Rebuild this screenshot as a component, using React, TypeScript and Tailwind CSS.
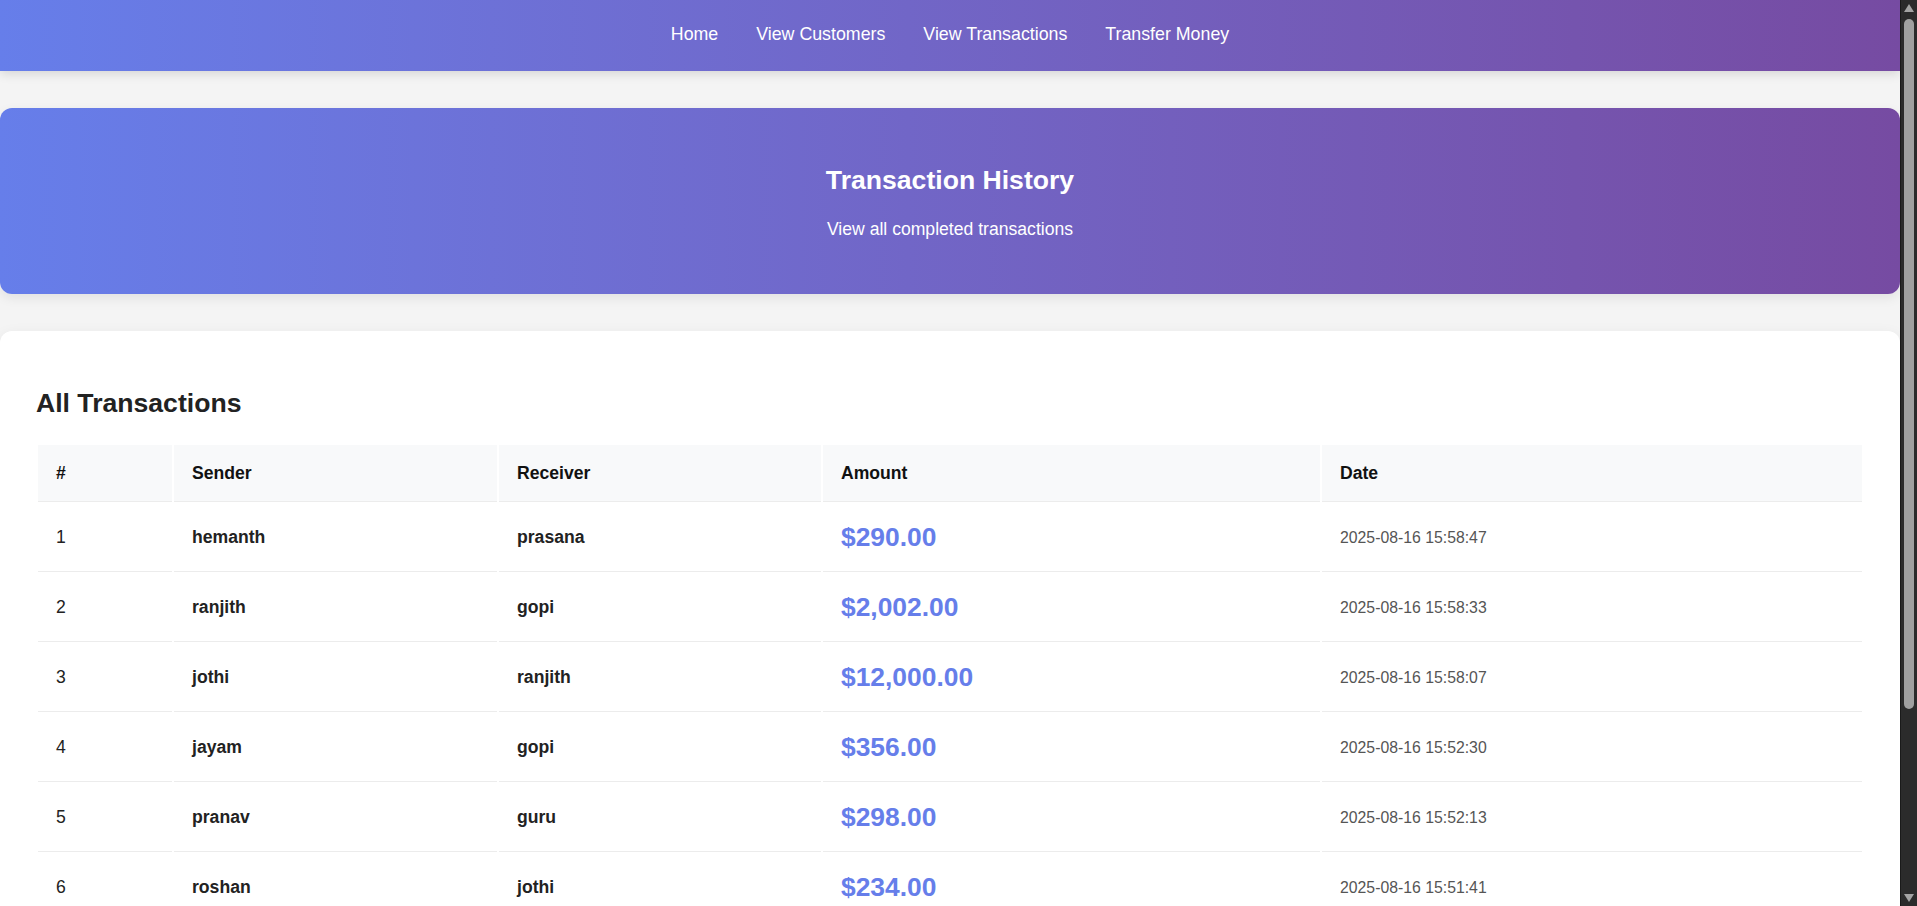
const links = ["Home", "View Customers", "View Transactions", "Transfer Money"];

const transactions = [
  { id: 1, sender: "hemanth", receiver: "prasana", amount: "$290.00", date: "2025-08-16 15:58:47" },
  { id: 2, sender: "ranjith", receiver: "gopi", amount: "$2,002.00", date: "2025-08-16 15:58:33" },
  { id: 3, sender: "jothi", receiver: "ranjith", amount: "$12,000.00", date: "2025-08-16 15:58:07" },
  { id: 4, sender: "jayam", receiver: "gopi", amount: "$356.00", date: "2025-08-16 15:52:30" },
  { id: 5, sender: "pranav", receiver: "guru", amount: "$298.00", date: "2025-08-16 15:52:13" },
  { id: 6, sender: "roshan", receiver: "jothi", amount: "$234.00", date: "2025-08-16 15:51:41" },
];

function Navbar() {
  return (
    <nav className="relative z-10 flex h-[71px] items-center justify-center gap-[38px] bg-gradient-to-r from-[#667eea] to-[#764ba2] pb-[3px] shadow-[0_3px_10px_rgba(0,0,0,0.12)]">
      {links.map((l) => (
        <a key={l} href="#" className="text-[17.8px] leading-[20px] text-white">
          {l}
        </a>
      ))}
    </nav>
  );
}

// the window's scrollbar, as seen in the screenshot
function Scrollbar() {
  return (
    <div className="fixed top-0 right-0 z-20 flex h-screen w-[17px] flex-col items-center border-l border-[#1a1a1a] bg-[#2b2b2b]">
      <svg width="10" height="8" viewBox="0 0 10 8" className="mt-[4px]">
        <polygon points="5,0 10,8 0,8" fill="#a3a3a3" />
      </svg>
      <div className="mt-[7px] h-[690px] w-[10px] rounded-full bg-[#a0a0a0]" />
      <div className="flex-1" />
      <svg width="10" height="8" viewBox="0 0 10 8" className="mb-[4px]">
        <polygon points="0,0 10,0 5,8" fill="#a3a3a3" />
      </svg>
    </div>
  );
}

function App() {
  return (
    <div className="min-h-screen bg-[#f4f4f4] pr-[17px] pb-[170px] font-['Liberation_Sans',Arial,sans-serif] text-[#222]">
      <Navbar />

      <main className="flex flex-col gap-[37px] pt-[37px]">
        <section className="flex flex-col items-center gap-[24px] rounded-[12px] bg-gradient-to-r from-[#667eea] to-[#764ba2] pt-[57px] pb-[55px] text-white shadow-[0_4px_12px_rgba(0,0,0,0.08)]">
          <h1 className="text-[26.6px] leading-[30px] font-bold">Transaction History</h1>
          <p className="text-[17.6px] leading-[20px]">View all completed transactions</p>
        </section>

        <section className="rounded-[12px] bg-white px-[36px] pt-[36px] pb-[36px] shadow-[0_4px_15px_rgba(0,0,0,0.07)]">
          <h2 className="mt-[21px] mb-[24px] text-[26.6px] leading-[31px] font-bold text-[#222]">
            All Transactions
          </h2>

          <table className="w-full table-fixed border-separate border-spacing-[2px] text-left">
            <colgroup>
              <col className="w-[134px]" />
              <col className="w-[323px]" />
              <col className="w-[322px]" />
              <col className="w-[497px]" />
              <col />
            </colgroup>
            <thead>
              <tr className="bg-[#f8f9fa]">
                {["#", "Sender", "Receiver", "Amount", "Date"].map((h) => (
                  <th
                    key={h}
                    className="h-[57px] border-b border-[#ececec] px-[18px] text-[17.6px] font-bold text-[#111]"
                  >
                    {h}
                  </th>
                ))}
              </tr>
            </thead>
            <tbody>
              {transactions.map((t) => (
                <tr key={t.id}>
                  <td className="h-[68px] border-b border-[#ececec] px-[18px] text-[17.6px]">{t.id}</td>
                  <td className="h-[68px] border-b border-[#ececec] px-[18px] text-[17.6px] font-bold">{t.sender}</td>
                  <td className="h-[68px] border-b border-[#ececec] px-[18px] text-[17.6px] font-bold">{t.receiver}</td>
                  <td className="h-[68px] border-b border-[#ececec] px-[18px] text-[26.4px] font-bold text-[#667eea]">
                    {t.amount}
                  </td>
                  <td className="h-[68px] border-b border-[#ececec] px-[18px] text-[15.8px] text-[#555]">{t.date}</td>
                </tr>
              ))}
            </tbody>
          </table>
        </section>
      </main>

      <Scrollbar />
    </div>
  );
}

export default App;
